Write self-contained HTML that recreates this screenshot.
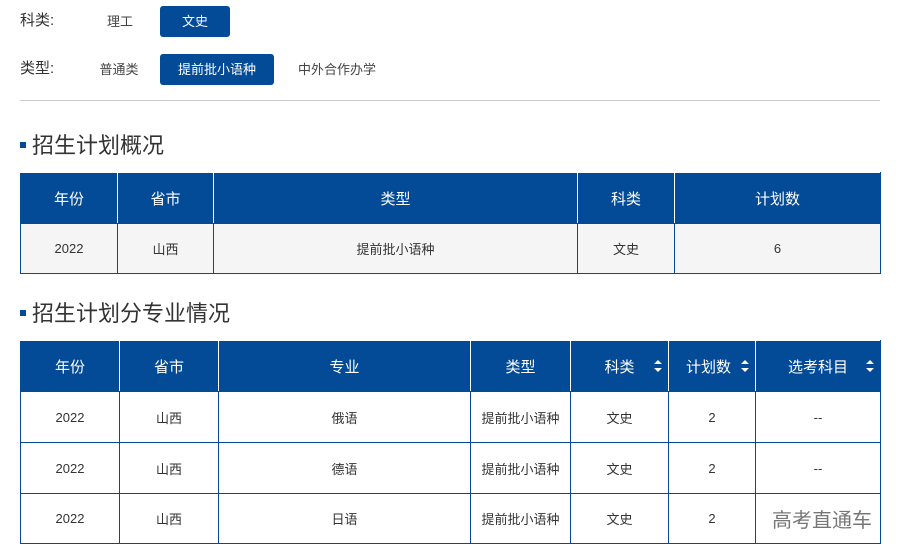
<!DOCTYPE html>
<html><head><meta charset="utf-8"><style>
*{margin:0;padding:0;box-sizing:border-box}
body{width:901px;height:557px;background:#fff;font-family:"Liberation Sans","Noto Sans CJK SC",sans-serif;color:#333;position:relative;overflow:hidden}
.a{position:absolute}
.lbl{font-size:15px;color:#333}
.opt{font-size:13px;color:#444;text-align:center;line-height:31px;height:31px}
.on{background:#034a97;color:#fff;border-radius:3px}
.ttl{font-size:22px;color:#333;line-height:26px}
.sq{width:6px;height:6px;background:#034a97}
table{position:absolute;border-collapse:collapse;left:20px;table-layout:fixed}
td,th{border:1px solid #034a97;text-align:center;font-size:13px;color:#333;font-weight:normal}
th{background:#034a97;color:#fff;font-size:15px;border-color:#fff #fff #034a97 #fff;position:relative}
th:first-child{border-left-color:#034a97}th:last-child{border-right-color:#034a97}
.s::after{content:"";position:absolute;right:6px;top:19px;border:4px solid transparent;border-bottom:4px solid #fff;border-top:0}
.s::before{content:"";position:absolute;right:6px;top:27px;border:4px solid transparent;border-top:4px solid #fff;border-bottom:0}
</style></head><body>
<div class="a lbl" style="left:20px;top:9px">科类:</div>
<div class="a opt" style="left:90px;top:6px;width:60px">理工</div>
<div class="a opt on" style="left:160px;top:6px;width:70px">文史</div>
<div class="a lbl" style="left:20px;top:57px">类型:</div>
<div class="a opt" style="left:88px;top:54px;width:62px">普通类</div>
<div class="a opt on" style="left:160px;top:54px;width:114px">提前批小语种</div>
<div class="a opt" style="left:284px;top:54px;width:106px">中外合作办学</div>
<div class="a" style="left:20px;top:100px;width:860px;height:1px;background:#ccc"></div>
<div class="a sq" style="left:20px;top:142px"></div>
<div class="a ttl" style="left:32px;top:133px">招生计划概况</div>
<table style="top:172px;width:860px">
<colgroup><col style="width:97px"><col style="width:96px"><col style="width:364px"><col style="width:97px"><col style="width:206px"></colgroup>
<tr style="height:51px"><th>年份</th><th>省市</th><th>类型</th><th>科类</th><th>计划数</th></tr>
<tr style="height:50px;background:#f5f5f5"><td>2022</td><td>山西</td><td>提前批小语种</td><td>文史</td><td>6</td></tr>
</table>
<div class="a sq" style="left:20px;top:310px"></div>
<div class="a ttl" style="left:32px;top:301px">招生计划分专业情况</div>
<table style="top:340px;width:860px">
<colgroup><col style="width:99px"><col style="width:99px"><col style="width:252px"><col style="width:100px"><col style="width:98px"><col style="width:87px"><col style="width:125px"></colgroup>
<tr style="height:51px"><th>年份</th><th>省市</th><th>专业</th><th>类型</th><th class="s">科类</th><th class="s" style="text-align:left;padding-left:17px">计划数</th><th class="s">选考科目</th></tr>
<tr style="height:51px"><td>2022</td><td>山西</td><td>俄语</td><td>提前批小语种</td><td>文史</td><td>2</td><td>--</td></tr>
<tr style="height:51px"><td>2022</td><td>山西</td><td>德语</td><td>提前批小语种</td><td>文史</td><td>2</td><td>--</td></tr>
<tr style="height:50px"><td>2022</td><td>山西</td><td>日语</td><td>提前批小语种</td><td>文史</td><td>2</td><td style="font-size:20px;color:#777;text-align:right;padding-right:8px">高考直通车</td></tr>
</table>
</body></html>
